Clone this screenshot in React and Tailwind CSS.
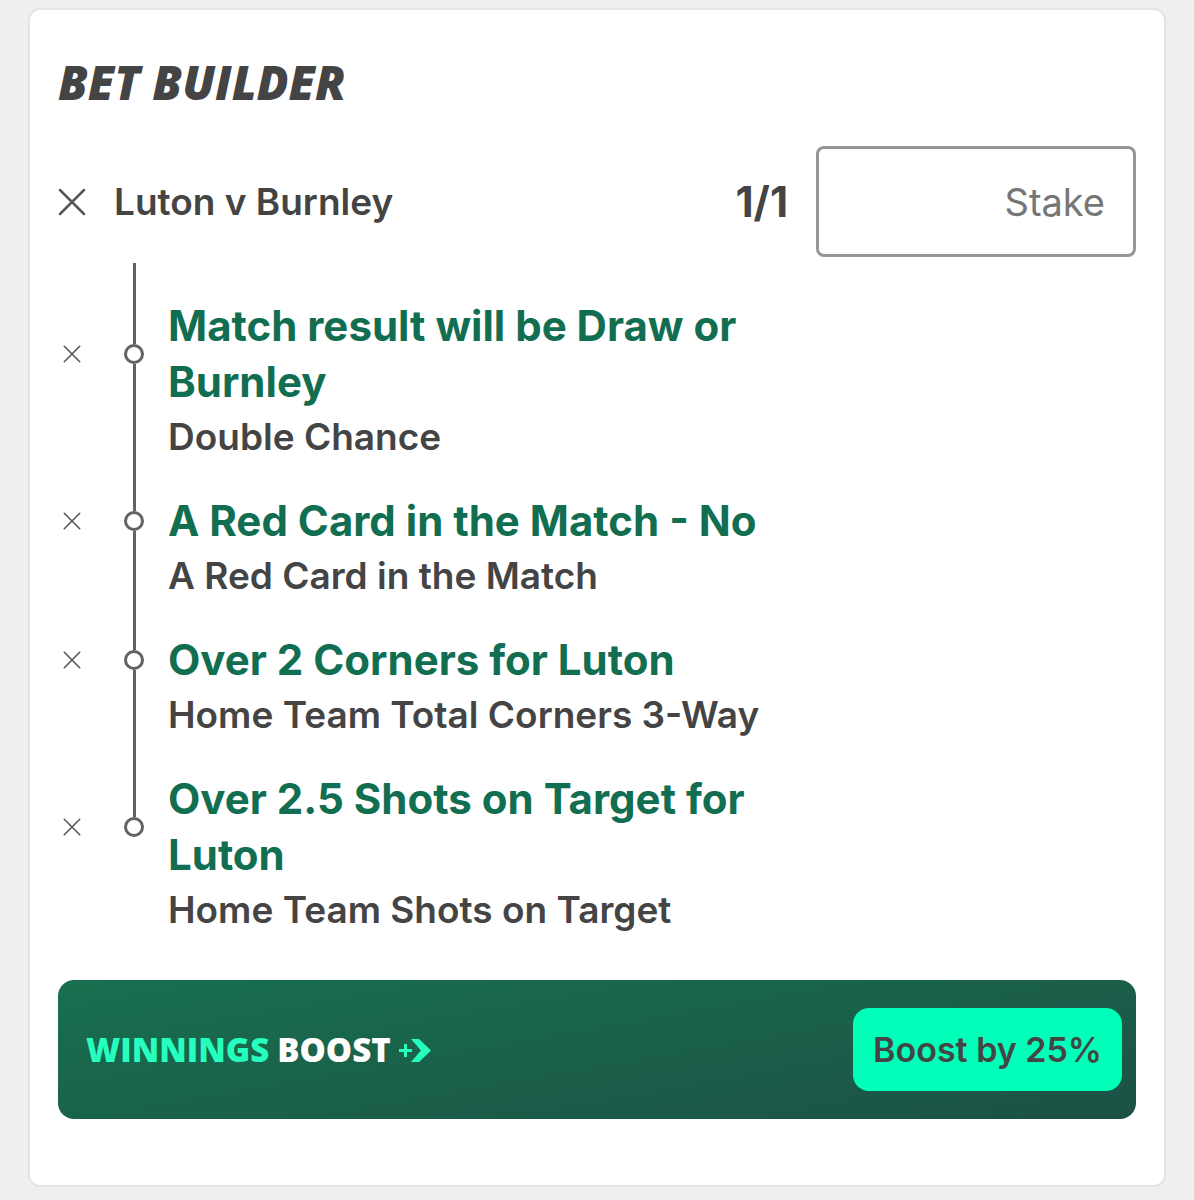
import React, { useState } from "react";

const initialSelections = [
  { id: 1, title: "Match result will be Draw or Burnley", market: "Double Chance" },
  { id: 2, title: "A Red Card in the Match - No", market: "A Red Card in the Match" },
  { id: 3, title: "Over 2 Corners for Luton", market: "Home Team Total Corners 3-Way" },
  { id: 4, title: "Over 2.5 Shots on Target for Luton", market: "Home Team Shots on Target" },
];

const CrossIcon = ({ className, strokeWidth }) => (
  <svg viewBox="0 0 28 28" className={className} fill="none" stroke="currentColor" strokeWidth={strokeWidth} strokeLinecap="round" aria-hidden="true">
    <path d="M2 2l24 24M26 2l-24 24" />
  </svg>
);

const BoostIcon = () => (
  <svg viewBox="0 0 32 24" className="h-6 w-8" fill="currentColor" aria-hidden="true">
    <path d="M5 6h3v5h5v3H8v5H5v-5H0v-3h5z" />
    <path d="M12 1h8l12 11.5L20 24h-8l10-11.5z" />
  </svg>
);

const BetBuilder = () => {
  const [selections, setSelections] = useState(initialSelections);
  const [stake, setStake] = useState("");

  const removeSelection = (id) => {
    setSelections(selections.filter((item) => item.id !== id));
  };

  return (
    <section className="rounded-xl border-2 border-[#e4e4e4] bg-white px-7 pt-[46px] pb-[66px] text-[#444444]">
      <h1 className="font-['Open_Sans',sans-serif] text-[47px] leading-[52px] font-extrabold italic">BET BUILDER</h1>

      {/* Fixture, odds and stake */}
      <div className="mt-[38px] flex items-center">
        <button type="button" aria-label="Remove bet" className="mr-7 cursor-pointer text-[#565656]">
          <CrossIcon className="size-7" strokeWidth="2.5" />
        </button>
        <h2 className="text-[37px] font-semibold">Luton v Burnley</h2>
        <span className="mr-7 ml-auto text-[42px] font-bold">1/1</span>
        <input
          type="text"
          inputMode="decimal"
          aria-label="Stake"
          placeholder="Stake"
          value={stake}
          onChange={(e) => setStake(e.target.value)}
          className="h-[111px] w-80 rounded-lg border-3 border-[#969696] px-7 text-right text-[38px] placeholder:text-[#767676]"
        />
      </div>

      {/* Line that joins the fixture to the selections */}
      <div className="mt-[6px] ml-[60px] flex h-[35px] w-8 justify-center">
        <span className="w-[3px] bg-[#626262]" />
      </div>

      {/* Selections */}
      <ul>
        {selections.map((item, index) => (
          <li key={item.id} className="grid grid-cols-[60px_32px_minmax(0,620px)]">
            <button
              type="button"
              aria-label={`Remove ${item.title}`}
              onClick={() => removeSelection(item.id)}
              className="flex w-7 cursor-pointer items-center justify-center text-[#565656]"
            >
              <CrossIcon className="size-[18px]" strokeWidth="2.5" />
            </button>
            <div className="flex flex-col items-center">
              <span className="w-[3px] flex-1 bg-[#626262]" />
              <span className="size-5 rounded-full border-3 border-[#626262]" />
              {index < selections.length - 1 ? <span className="w-[3px] flex-1 bg-[#626262]" /> : <span className="flex-1" />}
            </div>
            <h3 className="pl-[18px] text-[42px] leading-[56px] font-bold text-[#126e51]">{item.title}</h3>
            <div className="col-start-2 flex justify-center">
              {index < selections.length - 1 && <span className="w-[3px] bg-[#626262]" />}
            </div>
            <p className="pb-[30px] pl-[18px] text-[37px] leading-[53px] font-semibold">{item.market}</p>
          </li>
        ))}
      </ul>

      {/* Winnings boost */}
      <div className="mt-[14px] flex items-center rounded-2xl bg-linear-170 from-[#17704f] to-[#1b5145] py-7 pr-[14px] pl-7">
        <p className="flex items-center gap-2 font-['Open_Sans',sans-serif] text-[33px] font-extrabold text-white">
          <span className="text-[#26ffbe]">WINNINGS</span>
          <span>BOOST</span>
          <span className="text-[#26ffbe]">
            <BoostIcon />
          </span>
        </p>
        <button type="button" className="ml-auto h-[83px] cursor-pointer rounded-2xl bg-[#00ffb8] px-5 text-[34px] font-semibold">
          Boost by 25%
        </button>
      </div>
    </section>
  );
};

const App = () => (
  <main className="min-h-screen bg-[#efefef] px-7 pt-2 pb-3 font-['Inter',sans-serif]">
    <BetBuilder />
  </main>
);

export default App;
